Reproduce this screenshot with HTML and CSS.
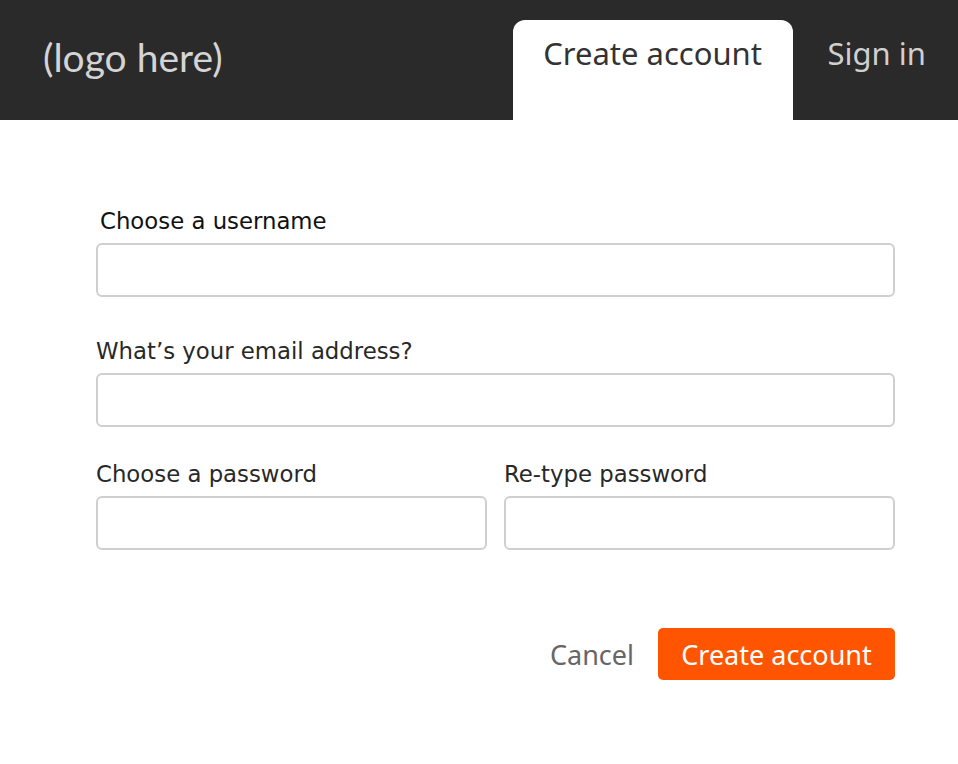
FILE: index.html
```html
<!DOCTYPE html>
<html>
<head>
<meta charset="utf-8">
<link rel="stylesheet" href="styles.css">
</head>
<body>
<header class="topbar">
  <div class="logo">(logo here)</div>
  <nav class="tabs">
    <a class="tab active">Create account</a>
    <a class="tab">Sign in</a>
  </nav>
</header>
<main class="form">
  <div class="field field-first">
    <label class="label first">Choose a username</label>
    <input class="input" type="text">
  </div>
  <div class="field">
    <label class="label">What’s your email address?</label>
    <input class="input" type="text">
  </div>
  <div class="row">
    <div class="field">
      <label class="label">Choose a password</label>
      <input class="input" type="password">
    </div>
    <div class="field">
      <label class="label">Re-type password</label>
      <input class="input" type="password">
    </div>
  </div>
  <div class="actions">
    <a class="cancel">Cancel</a>
    <button class="submit">Create account</button>
  </div>
</main>
</body>
</html>
```
FILE: styles.css
```css
* { box-sizing: border-box; }
body { margin: 0; background: #fff; font-family: "DejaVu Sans", sans-serif; }
.topbar {
  height: 120px;
  background: #2a2a2a;
  display: flex;
  align-items: flex-start;
  justify-content: space-between;
}
.logo {
  font-family: "Lato", sans-serif;
  font-size: 39px;
  color: #d4d4d4;
  padding: 34px 0 0 43px;
  line-height: 46px;
}
.tabs { display: flex; align-items: flex-start; padding-top: 20px; }
.tab {
  font-family: "Noto Sans", sans-serif;
  font-size: 31px;
  line-height: 40px;
  padding: 13px 0 47px;
  color: #d0d0d0;
}
.tab.active {
  background: #fff;
  color: #333;
  width: 280px;
  text-align: center;
  border-radius: 12px 12px 0 0;
  margin-right: 35px;
}
.tab:last-child { margin-right: 32px; }
.form {
  width: 799px;
  margin-left: 96px;
  padding-top: 87px;
}
.field { display: flex; flex-direction: column; margin-bottom: 33px; flex: 1; }
.field-first { margin-bottom: 40px; }
.label {
  font-size: 22.8px;
  line-height: 28px;
  color: #282828;
  margin-bottom: 8px;
}
.label.first { padding-left: 4px; color: #111; }
.input {
  height: 54px;
  border: 2px solid #cfcfcf;
  border-radius: 6px;
  background: #fff;
}
.row { display: flex; gap: 17px; }
.row .field { margin-bottom: 0; }
.actions {
  display: flex;
  justify-content: flex-end;
  align-items: center;
  gap: 24px;
  margin-top: 78px;
}
.cancel {
  font-family: "Noto Sans", sans-serif;
  font-size: 27px;
  color: #666;
}
.submit {
  font-family: "Noto Sans", sans-serif;
  font-size: 27px;
  color: #fff;
  background: #ff5500;
  border: none;
  border-radius: 5px;
  width: 237px;
  height: 52px;
  padding: 0;
}
```
